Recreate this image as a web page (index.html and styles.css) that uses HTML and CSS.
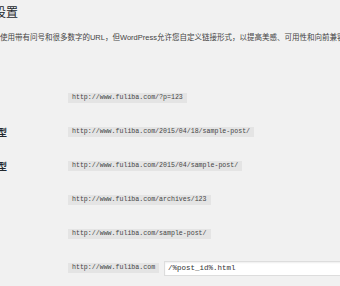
FILE: index.html
```html
<!DOCTYPE html>
<html lang="zh-CN">
<head>
  <meta charset="UTF-8">
  <title>固定链接设置</title>
  <meta name="viewport" content="width=device-width, initial-scale=1">
  <link rel="stylesheet" href="styles.css">
</head>
<body>
  <div class="wrap">
    <h1>固定链接设置</h1>
    <p class="intro">WordPress默认使用带有问号和很多数字的URL，但WordPress允许您自定义链接形式，以提高美感、可用性和向前兼容性。</p>

    <table class="form-table">
      <tbody>
        <tr>
          <th>朴素</th>
          <td><code>http://www.fuliba.com/?p=123</code></td>
        </tr>
        <tr>
          <th>日期和名称型</th>
          <td><code>http://www.fuliba.com/2015/04/18/sample-post/</code></td>
        </tr>
        <tr>
          <th>月份和名称型</th>
          <td><code>http://www.fuliba.com/2015/04/sample-post/</code></td>
        </tr>
        <tr>
          <th>数字型</th>
          <td><code>http://www.fuliba.com/archives/123</code></td>
        </tr>
        <tr>
          <th>文章名</th>
          <td><code>http://www.fuliba.com/sample-post/</code></td>
        </tr>
        <tr>
          <th>自定义结构</th>
          <td>
            <code>http://www.fuliba.com</code>
            <input type="text" class="regular-text" value="/%post_id%.html">
          </td>
        </tr>
      </tbody>
    </table>
  </div>
</body>
</html>
```

FILE: styles.css
```css
body {
  margin: 0;
  background: #f1f1f1;
  color: #444;
  font-family: "Liberation Sans", "Noto Sans CJK SC", sans-serif;
  overflow: hidden;
}
.wrap {
  margin-left: -52px;
  padding-top: 5px;
  width: 760px;
}
h1 {
  font-size: 12px;
  font-weight: 400;
  line-height: 16px;
  color: #23282d;
  margin: 0 0 0 -2px;
}
.intro {
  font-size: 7.5px;
  line-height: 10px;
  margin: 12px 0 0;
  white-space: nowrap;
}
.form-table {
  border-collapse: collapse;
  margin-top: 38px;
}
.form-table th,
.form-table td {
  padding: 0;
  height: 34px;
  vertical-align: middle;
}
.form-table th {
  width: 115px;
  padding-left: 5px;
  text-align: left;
  font-size: 9px;
  font-weight: 700;
  color: #23282d;
}
.form-table td {
  white-space: nowrap;
  font-size: 0;
}
code {
  display: inline-block;
  vertical-align: middle;
  font-family: "Liberation Mono", monospace;
  font-size: 6.6px;
  line-height: 10px;
  padding: 0 4px;
  background: #e4e4e4;
  color: #444;
}
.regular-text {
  vertical-align: middle;
  margin: 0 0 0 5px;
  width: 330px;
  height: 15px;
  box-sizing: border-box;
  padding: 0 3px;
  border: 1px solid #ddd;
  box-shadow: inset 0 1px 2px rgba(0, 0, 0, 0.07);
  background: #fff;
  font-family: "Liberation Mono", monospace;
  font-size: 7.5px;
  color: #333;
  outline: none;
}
```
